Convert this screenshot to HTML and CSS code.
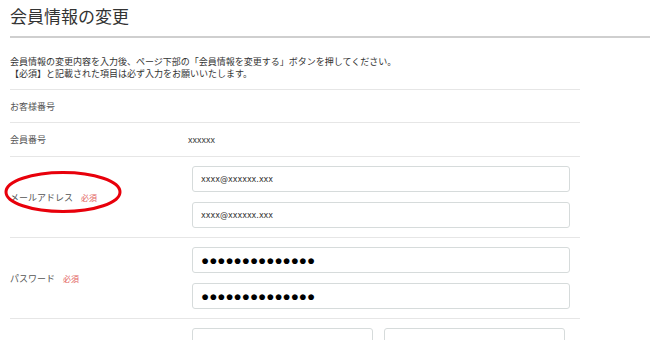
FILE: index.html
```html
<!DOCTYPE html>
<html lang="ja">
<head>
    <meta charset="UTF-8">
    <meta name="viewport" content="width=device-width, initial-scale=1.0">
    <title>会員情報の変更</title>
    <link rel="stylesheet" href="styles.css">
</head>
<body>

    <h1 class="page-title">会員情報の変更</h1>

    <div class="member-form">
        <!-- Intro text -->
        <p class="intro">
            会員情報の変更内容を入力後、ページ下部の「会員情報を変更する」ボタンを押してください。<br>
            【必須】と記載された項目は必ず入力をお願いいたします。
        </p>

        <div class="form-row">
            <div class="form-label">お客様番号</div>
            <div class="form-value"></div>
        </div>

        <div class="form-row tall">
            <div class="form-label">会員番号</div>
            <div class="form-value">xxxxxx</div>
        </div>

        <div class="form-row">
            <div class="form-label marked">
                メールアドレス<span class="required">必須</span>
                <svg class="circle-mark" width="120" height="46" viewBox="0 0 120 46">
                    <ellipse cx="60" cy="23" rx="57" ry="19.5" fill="none" stroke="#e8000b" stroke-width="3"/>
                </svg>
            </div>
            <div class="form-inputs">
                <input type="text" class="text-input" value="xxxx@xxxxxx.xxx">
                <input type="text" class="text-input" value="xxxx@xxxxxx.xxx">
            </div>
        </div>

        <div class="form-row">
            <div class="form-label">パスワード<span class="required">必須</span></div>
            <div class="form-inputs">
                <input type="text" class="text-input dots" value="●●●●●●●●●●●●●●">
                <input type="text" class="text-input dots" value="●●●●●●●●●●●●●●">
            </div>
        </div>

        <!-- next row starts at the bottom edge -->
        <div class="form-row">
            <div class="form-label"></div>
            <div class="form-inputs">
                <div class="input-pair">
                    <input type="text" class="text-input">
                    <input type="text" class="text-input">
                </div>
            </div>
        </div>
    </div>

</body>
</html>
```

FILE: styles.css
```css
body {
    font-family: 'Noto Sans CJK JP', sans-serif;
    background-color: #ffffff;
    color: #333333;
    margin: 0;
    padding: 0 0 0 10px;
    overflow: hidden;
}

.page-title {
    font-size: 17px;
    font-weight: normal;
    line-height: 24px;
    margin: 0;
    padding: 4px 0 8px 0;
    border-bottom: 2px solid #cfcfcf;
    color: #333333;
}

.member-form {
    width: 570px;
}

.intro {
    font-size: 9px;
    line-height: 12px;
    margin: 18px 0 9px 0;
    color: #333333;
}

.form-row {
    display: grid;
    grid-template-columns: 178px 1fr;
    align-items: center;
    min-height: 32px;
    border-top: 1px solid #e6e6e6;
}

.form-row.tall {
    min-height: 33px;
}

.form-label {
    font-size: 9px;
    color: #555555;
}

.form-label.marked {
    position: relative;
}

.circle-mark {
    position: absolute;
    left: -7px;
    top: -22px;
}

.required {
    font-size: 8px;
    color: #e2625e;
    margin-left: 8px;
}

.form-value {
    font-size: 9px;
    color: #444444;
}

.form-inputs {
    display: flex;
    flex-direction: column;
    gap: 10px;
    padding: 9px 10px 9px 4px;
}

.text-input {
    box-sizing: border-box;
    height: 26px;
    width: 100%;
    padding: 0 8px;
    border: 1px solid #d6dbdb;
    border-radius: 3px;
    font-family: 'DejaVu Sans', sans-serif;
    font-size: 8px;
    color: #333333;
    outline: none;
}

.text-input.dots {
    font-family: 'Liberation Sans', sans-serif;
    font-size: 13.5px;
    color: #000000;
}

.input-pair {
    display: flex;
    gap: 11px;
}

.input-pair .text-input {
    width: 181px;
}
```
